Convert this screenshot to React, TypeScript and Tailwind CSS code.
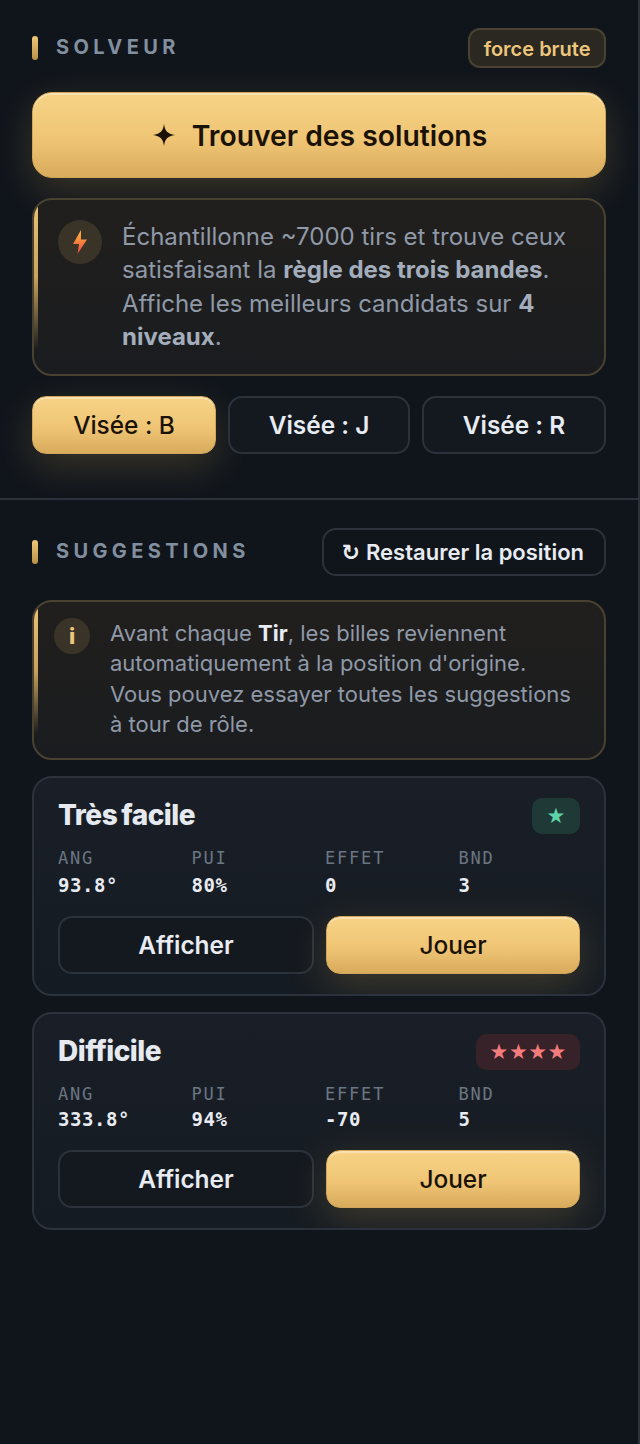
const goldBtn = "bg-gradient-to-b from-[#f7d386] via-[#efc575] via-55% to-[#d9ab5c] border border-[#cfa65a] shadow-[inset_0_2px_0_rgba(255,255,255,0.35),0_12px_40px_rgba(232,184,90,0.2)] text-[#1a1205]";

function SectionTitle({ children }: { children: string }) {
  return (
    <div className="flex items-center gap-[18px]">
      <span className="w-[6px] h-[24px] rounded-[3px] bg-gradient-to-b from-[#f0c878] to-[#b8924a]" />
      <span className="text-[20px] font-bold tracking-[4.36px] text-[#828f9f] leading-[24px] pb-[2px]">{children}</span>
    </div>
  );
}

function Callout({ children, icon, className }: { children: React.ReactNode; icon: React.ReactNode; className: string }) {
  return (
    <div className={`relative overflow-hidden rounded-[20px] border-2 border-[#4a4230] bg-gradient-to-b from-[#211f1d] to-[#1a1c1f] flex ${className}`}>
      <span className="absolute left-0 top-[4px] bottom-[24px] w-[4px] bg-gradient-to-b from-[#eac272] via-[#c8a45e] via-50% to-transparent" />
      {icon}
      {children}
    </div>
  );
}

function Card({ title, stars, starClass, stats, valueGap }: { title: string; stars: string; starClass: string; stats: string[]; valueGap: string }) {
  const labels = ["ANG", "PUI", "EFFET", "BND"];
  return (
    <div className="overflow-hidden rounded-[20px] border-2 border-[#2b323c] bg-gradient-to-b from-[#1a1f27] to-[#151b22] px-[24px] pt-[19px] pb-[20px]">
      <div className="flex items-center justify-between h-[36px]">
        <span className="text-[28px] font-extrabold tracking-[-0.5px] [word-spacing:-1.5px] text-[#e6eaf0] leading-[36px]">{title}</span>
        <span className={`h-[36px] mt-[2px] pt-[2px] rounded-[10px] flex items-center justify-center text-[18.5px] ${starClass}`}>{stars}</span>
      </div>
      <div className="grid grid-cols-4 gap-x-[12px] mt-[15px] font-['DejaVu_Sans_Mono',monospace]">
        {labels.map((l, i) => (
          <div key={l}>
            <div className="text-[17px] leading-[20px] tracking-[1.8px] text-[#6b7683]">{l}</div>
            <div className={`text-[19px] leading-[24px] font-bold text-[#e8ecf2] tracking-[0.55px] ${valueGap}`}>{stats[i]}</div>
          </div>
        ))}
      </div>
      <div className="flex gap-[12px] mt-[19px]">
        <button className="flex-1 h-[58px] rounded-[14px] border-2 border-[#2b323c] bg-[#141920] text-[24.4px] font-semibold text-[#e8ecf2]">Afficher</button>
        <button className={`flex-1 h-[58px] rounded-[14px] text-[24.4px] font-medium ${goldBtn}`}>Jouer</button>
      </div>
    </div>
  );
}

export default function App() {
  return (
    <div className="w-[640px] h-[1444px] bg-[#10151c] font-['Inter',sans-serif] overflow-hidden border-r-2 border-[#2b323c]">
      <section className="px-[32px] pt-[28px] pb-[44px] border-b-2 border-[#2b323c]">
        <div className="flex items-center justify-between">
          <SectionTitle>SOLVEUR</SectionTitle>
          <span className="h-[40px] pt-[2px] px-[13.5px] rounded-[12px] border-2 border-[#4a4230] bg-[#2a2820] text-[20px] font-semibold text-[#edc67c] flex items-center">force brute</span>
        </div>
        <button className={`mt-[24px] w-full h-[86px] pl-[2px] rounded-[20px] text-[28.3px] font-semibold flex items-center justify-center gap-[17px] ${goldBtn}`}>
          <svg width="22" height="22" viewBox="0 0 20 20" className="fill-[#1a1205]"><path d="M10 0 C10.8 6 13.2 9.2 20 10 C13.2 10.8 10.8 14 10 20 C9.2 14 6.8 10.8 0 10 C6.8 9.2 9.2 6 10 0Z" /></svg>
          <span className="pt-[2px]">Trouver des solutions</span>
        </button>
        <Callout
          className="mt-[20px] pl-[24px] pr-[24px] pt-[20px] pb-[20.5px] gap-[20px]"
          icon={
            <span className="shrink-0 w-[44px] h-[44px] rounded-full bg-[#3a3428] flex items-center justify-center">
              <svg width="14" height="24" viewBox="0 0 14 24">
                <defs><linearGradient id="b" x1="0" y1="0" x2="0" y2="1"><stop offset="0" stopColor="#fbbf3c" /><stop offset="1" stopColor="#ef4444" /></linearGradient></defs>
                <path d="M8 0 L0 14 H6 L4.5 24 L14 9.5 H8 Z" fill="url(#b)" />
              </svg>
            </span>
          }
        >
          <p className="text-[24px] leading-[33.3px] text-[#8f99a8]">
            Échantillonne ~7000 tirs et trouve ceux satisfaisant la <b className="font-bold text-[#a3adbb]">règle des trois bandes</b>. Affiche les meilleurs candidats sur <b className="font-bold text-[#a3adbb]">4 niveaux</b>.
          </p>
        </Callout>
        <div className="flex mt-[20px] justify-between [font-feature-settings:'calt'_0]">
          <button className={`w-[184px] h-[58px] pt-[2px] rounded-[14px] text-[24.4px] font-medium ${goldBtn}`}>Visée : B</button>
          <button className="w-[182px] h-[58px] pt-[2px] rounded-[14px] border-2 border-[#2b323c] bg-[#141920] text-[24.4px] font-semibold text-[#e8ecf2]">Visée : J</button>
          <button className="w-[184px] h-[58px] pt-[2px] rounded-[14px] border-2 border-[#2b323c] bg-[#141920] text-[24.4px] font-semibold text-[#e8ecf2]">Visée : R</button>
        </div>
      </section>
      <section className="px-[32px] pt-[28px]">
        <div className="flex items-center justify-between">
          <SectionTitle>SUGGESTIONS</SectionTitle>
          <button className="h-[48px] pl-[18px] pr-[20px] pt-[1px] rounded-[14px] border-2 border-[#2b323c] bg-[#10151c] text-[22px] font-semibold text-[#e8ecf2] flex items-center gap-[6px]">
            <span className="font-['DejaVu_Sans',sans-serif] font-bold">↻</span>
            Restaurer la position
          </button>
        </div>
        <Callout
          className="mt-[24px] pl-[20px] pr-[24px] pt-[16.5px] pb-[18.5px] gap-[20px]"
          icon={
            <span className="shrink-0 w-[36px] h-[36px] rounded-full bg-[#3a3428] flex items-center justify-center text-[22px] font-extrabold text-[#edc67c]">i</span>
          }
        >
          <p className="text-[22px] leading-[30.3px] text-[#8f99a8]">
            Avant chaque <b className="font-bold text-[#e8ecf2]">Tir</b>, les billes reviennent automatiquement à la position d'origine. Vous pouvez essayer toutes les suggestions à tour de rôle.
          </p>
        </Callout>
        <div className="flex flex-col gap-[16px] mt-[16px]">
          <Card title="Très facile" stars="★" starClass="w-[48px] bg-[#1f3a36] text-[#5fd3a8]" stats={["93.8°", "80%", "0", "3"]} valueGap="mt-[5px]" />
          <Card title="Difficile" stars="★★★★" starClass="w-[104px] bg-[#362228] text-[#f47c7c]" stats={["333.8°", "94%", "-70", "5"]} valueGap="mt-[3px]" />
        </div>
      </section>
    </div>
  );
}
